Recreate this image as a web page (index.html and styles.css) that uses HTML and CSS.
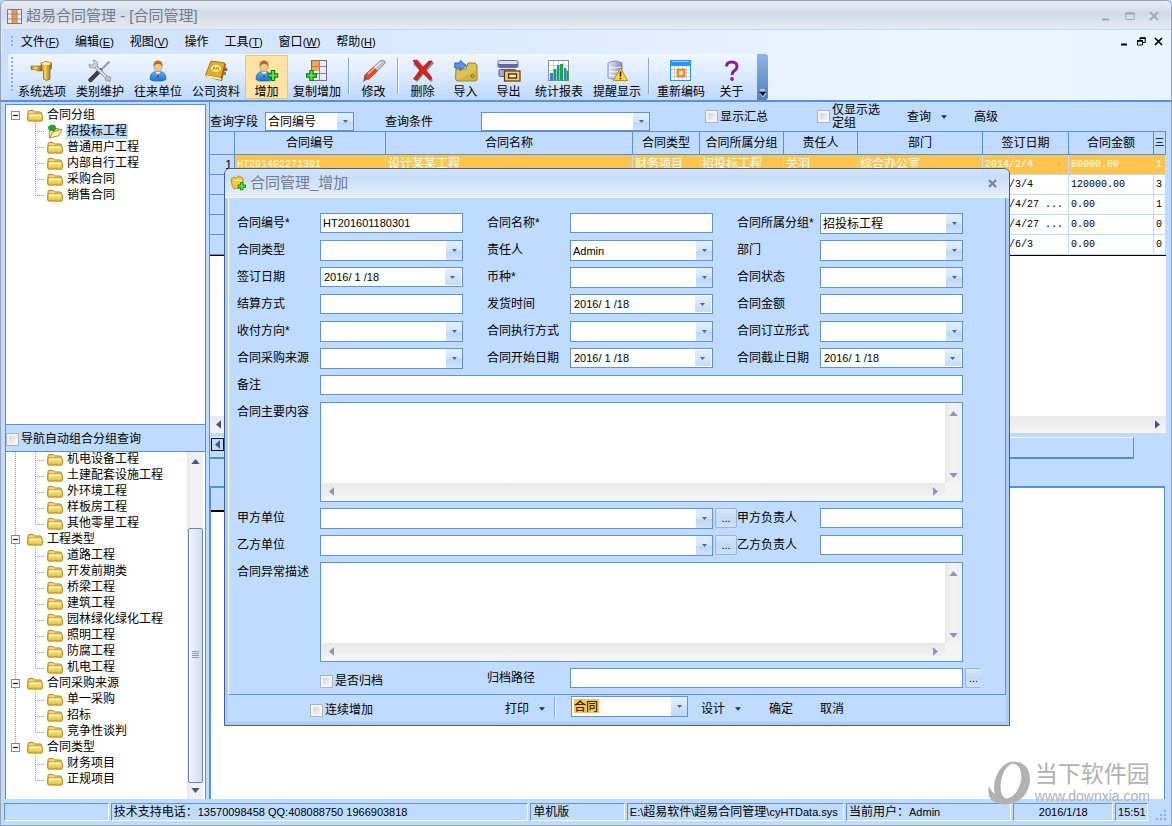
FILE: index.html
```html
<!DOCTYPE html>
<html lang="zh-CN">
<head>
    <meta charset="UTF-8">
    <meta name="viewport" content="width=device-width, initial-scale=1.0">
    <title>超易合同管理</title>
    <link rel="stylesheet" href="styles.css">
</head>
<body>
    <!-- 公用图标 -->
    <svg class="sprite" aria-hidden="true">
        <defs>
            <linearGradient id="g-gold" x1="0" y1="0" x2="0" y2="1"><stop offset="0" stop-color="#fdf2a0"/><stop offset="1" stop-color="#e3b92f"/></linearGradient>
            <linearGradient id="g-brass" x1="0" y1="0" x2="1" y2="0"><stop offset="0" stop-color="#b8860f"/><stop offset=".4" stop-color="#f6d65c"/><stop offset="1" stop-color="#8e6208"/></linearGradient>
            <linearGradient id="g-coat" x1="0" y1="0" x2="0" y2="1"><stop offset="0" stop-color="#5cb0f4"/><stop offset="1" stop-color="#1f6fd0"/></linearGradient>
            <linearGradient id="g-db" x1="0" y1="0" x2="1" y2="0"><stop offset="0" stop-color="#e8ebfa"/><stop offset="1" stop-color="#8388c4"/></linearGradient>
        </defs>
        <symbol id="folder" viewBox="0 0 16 14">
            <path d="M1 11V3.5Q1 2 2.500 2H6L7.500 3.500H13Q14.500 3.500 14.500 5V11" fill="#f3dd72" stroke="#a88310"/>
            <path d="M1.500 12.500Q.8 12.500 .8 11.500V6.500Q.8 5.500 2 5.500H14Q15.300 5.500 15.300 6.500V11.500Q15.300 12.700 14 12.700Z" fill="url(#g-gold)" stroke="#b08a12"/>
            <path d="M2 6.500H14" stroke="#fffbd8"/>
        </symbol>
        <symbol id="folder-open" viewBox="0 0 16 16">
            <path d="M2 15V5H12V8" fill="#f7e9a0" stroke="#b08a12"/>
            <path d="M2 15L6 8.500L15.500 5.500L12 12.500Z" fill="#fdf3a8" stroke="#b08a12"/>
            <path d="M1 3L4 1L8 1.500L9 5L7 7.500L3 7L1 5Z" fill="#23a628" stroke="#0d7a16" stroke-width=".6"/>
        </symbol>
        <symbol id="tri-up" viewBox="0 0 10 6"><path d="M0 6L5 0L10 6Z"/></symbol>
        <symbol id="tri-down" viewBox="0 0 10 6"><path d="M0 0H10L5 6Z"/></symbol>
        <symbol id="tri-left" viewBox="0 0 6 10"><path d="M6 0V10L0 5Z"/></symbol>
        <symbol id="tri-right" viewBox="0 0 6 10"><path d="M0 0V10L6 5Z"/></symbol>
        <symbol id="person" viewBox="0 0 24 24">
            <path d="M4 20.500Q4 13 10 12.500H14Q20 13 20 20.500L17 22H7Z" fill="url(#g-coat)" stroke="#1b62b8" stroke-width=".7"/>
            <path d="M9.500 12.500L12 17L14.500 12.500Z" fill="#fff"/>
            <path d="M12 13L11.300 17L12 19L12.700 17Z" fill="#234"/>
            <ellipse cx="12" cy="7.500" rx="4" ry="5" fill="#f7c58c" stroke="#b97b35" stroke-width=".6"/>
            <path d="M7.500 7.500Q7 1.500 12 1.500Q17 1.500 16.500 7.500Q15.500 4.800 12.500 5Q9 4.500 7.500 7.500Z" fill="#a8742c"/>
        </symbol>
        <symbol id="plus" viewBox="0 0 10 10"><path d="M3.500 .5H6.500V3.500H9.500V6.500H6.500V9.500H3.500V6.500H.5V3.500H3.500Z" fill="#5fe03a" stroke="#067a10"/></symbol>
    </svg>

    <!-- 标题栏 -->
    <header class="titlebar">
        <svg class="app-icon" viewBox="0 0 15 15"><rect x=".5" y=".5" width="14" height="14" fill="#e8e9f4" stroke="#77768c"/><rect x="5" y="1" width="5" height="13" fill="#f59a35"/><path d="M5 1V14M10 1V14M1 5H14M1 10H14" stroke="#8a819a" stroke-width=".8"/></svg>
        <h1>超易合同管理 - [合同管理]</h1>
        <div class="window-buttons">
            <button aria-label="最小化"><svg viewBox="0 0 10 10"><path d="M1 8.500H8" stroke="#a3a8b4" stroke-width="2"/></svg></button>
            <button aria-label="最大化"><svg viewBox="0 0 10 10"><path d="M.8 2H9.200V8.500H.8Z" fill="none" stroke="#a3a8b4"/><path d="M.5 2.500H9.500" stroke="#a3a8b4" stroke-width="2"/></svg></button>
            <button aria-label="关闭"><svg viewBox="0 0 10 10"><path d="M1 1L9 9M9 1L1 9" stroke="#a3a8b4" stroke-width="2"/></svg></button>
        </div>
    </header>

    <!-- 菜单栏 -->
    <nav class="menubar">
        <span class="grip"></span>
        <button>文件<span class="en">(<u>F</u>)</span></button>
        <button>编辑<span class="en">(<u>E</u>)</span></button>
        <button>视图<span class="en">(<u>V</u>)</span></button>
        <button>操作</button>
        <button>工具<span class="en">(<u>T</u>)</span></button>
        <button>窗口<span class="en">(<u>W</u>)</span></button>
        <button>帮助<span class="en">(<u>H</u>)</span></button>
        <div class="mdi-buttons">
            <button aria-label="子窗口最小化"><svg viewBox="0 0 9 9"><path d="M1 7.500H7" stroke="#000" stroke-width="2"/></svg></button>
            <button aria-label="子窗口还原"><svg viewBox="0 0 9 9"><path d="M.5 3.500H5.500V8H.5ZM3 3V.8H8.200V5.500H6" fill="none" stroke="#000"/><path d="M0 4H6M3 1.200H8.500" stroke="#000" stroke-width="1.500"/></svg></button>
            <button aria-label="子窗口关闭"><svg viewBox="0 0 9 9"><path d="M1 1L8 8M8 1L1 8" stroke="#000" stroke-width="1.700"/></svg></button>
        </div>
    </nav>

    <!-- 工具栏 -->
    <div class="toolbar-row">
        <div class="toolbar">
            <span class="grip tall"></span>
            <button class="tool"><svg viewBox="0 0 24 24"><path d="M1 7H12V12H8L5 10.500H1Z" fill="url(#g-brass)" stroke="#8a640e" stroke-width=".6"/><path d="M11 4Q16 1 21.500 4V9L20 12V20Q16.500 23 13.500 20V12L11 9Z" fill="url(#g-brass)" stroke="#8a640e" stroke-width=".7"/><ellipse cx="16.200" cy="4.500" rx="4.500" ry="1.600" fill="#f9e894"/></svg>系统选项</button>
            <button class="tool"><svg viewBox="0 0 24 24"><path d="M21.500 2.500L12 12" stroke="#9aa0a8" stroke-width="2.200"/><path d="M12 11.500L2.500 21" stroke="#3c3f45" stroke-width="4.500" stroke-linecap="round"/><path d="M5 5L19.500 19.500" stroke="#9a9fa8" stroke-width="3.500"/><path d="M5.500 5.500L19 19" stroke="#e5e8ec" stroke-width="1.500"/><path d="M1 5L4 6.500L6.500 4L5 1Q10 1 9.500 6.500Q7 10 1.500 8.500Z" fill="#d0d4da" stroke="#878c94" stroke-width=".7"/><path d="M17 21L19 17L23 18.500L22 22.500Z" fill="#bfc3c9" stroke="#878c94" stroke-width=".7"/></svg>类别维护</button>
            <button class="tool"><svg><use href="#person"/></svg>往来单位</button>
            <button class="tool"><svg viewBox="0 0 24 24"><path d="M7 3L22 5L18 22L2 18Z" fill="#8f5f0b"/><path d="M20 8L23 9V12L20 12Z" fill="#e23a2a"/><path d="M19.500 12.500L22 13V16L19 16Z" fill="#3cb04a"/><path d="M7 2L21 4L17 19L1.500 16Z" fill="#e2ac24" stroke="#94650c" stroke-width=".8"/><path d="M2 16L17 19L17.500 21L3 18.500Z" fill="#fbeec0"/><ellipse cx="12" cy="9.500" rx="5" ry="3.700" fill="#f8e692"/><path d="M9 11L10 8L12 10.500L13.500 8L15 11" fill="none" stroke="#b5801b"/></svg>公司资料</button>
            <button class="tool active"><svg viewBox="0 0 24 24"><use href="#person" x="-3" width="24" height="24"/><use href="#plus" x="12.500" y="11" width="11" height="11"/></svg>增加</button>
            <button class="tool"><svg viewBox="0 0 24 24"><rect x="6.500" y="1.500" width="15" height="20" fill="#eceaf6" stroke="#736f80"/><rect x="7" y="2" width="7" height="10" fill="#f7a650"/><path d="M14.500 2V21.500M7 7.500H21M7 14.500H21" stroke="#8a8598"/><use href="#plus" x="1" y="11" width="11" height="11"/></svg>复制增加</button>
            <span class="sep"></span>
            <button class="tool"><svg viewBox="0 0 24 24"><path d="M1 23L2.500 17L6 19.500Z" fill="#60616a"/><path d="M2.500 16.500L11.500 8L15.500 12L6.500 20.500Q2.500 20.500 2.500 16.500Z" fill="#e84a24" stroke="#8d2912" stroke-width=".7"/><path d="M11.500 8L18 2Q22 0 23.500 3.500L15.500 12Z" fill="#c2c3ce" stroke="#666773" stroke-width=".7"/><path d="M6 15L19 3" stroke="#fff" stroke-opacity=".65" stroke-width="1.500"/></svg>修改</button>
            <span class="sep"></span>
            <button class="tool"><svg viewBox="0 0 24 24"><path d="M3 4L21 22M22 3L5 22" stroke="#8b8b93" stroke-width="3"/><path d="M2 1.500L6 1L12 8L18 2L21 2L14.500 10.500L21 19L19 21L12 13.500L5.500 21L2.500 20L9 11Z" fill="#df2020" stroke="#a30f10" stroke-width=".7"/></svg>删除</button>
            <button class="tool"><svg viewBox="0 0 24 24"><path d="M2 10H12L14 4H21L23 6V21L21 22H3L1.500 20Z" fill="#dcc158" stroke="#8e7621" stroke-width=".9"/><path d="M3 21L22 12V21Z" fill="#c9a838" opacity=".6"/><circle cx="18.500" cy="17" r="1.500" fill="none" stroke="#7d651a"/><path d="M.8 4H6V1.500L12.500 6.500L6 11.500V9H.8Z" fill="#5c92ec" stroke="#214ea8" stroke-width=".8"/></svg>导入</button>
            <button class="tool"><svg viewBox="0 0 24 24"><rect x="1" y="1.500" width="20" height="7" rx="1.500" fill="#dcdff2" stroke="#6a6c92"/><path d="M1 5H21V8H1Z" fill="#6668a4"/><rect x="2" y="10.500" width="17" height="7" rx="1.500" fill="#a6a9d0" stroke="#56587e"/><rect x="7.500" y="12" width="15.500" height="10" fill="#ffc864" stroke="#5a3a0a" stroke-width="1.200"/><rect x="11.500" y="15" width="8" height="4" fill="#ffe9bd" stroke="#352408" stroke-width="1.300"/></svg>导出</button>
            <button class="tool"><svg viewBox="0 0 24 24"><rect x="1.500" y="1.500" width="20" height="20" fill="#fff" stroke="#84909c"/><path d="M2 6.500H21M2 11.500H21M2 16.500H21M6.500 2V21M11.500 2V21M16.500 2V21" stroke="#c6cdd4" stroke-width=".8"/><path d="M3 14H6V21.500H3Z M10 6H12.500V21.500H10Z M17 9H19.500V21.500H17Z" fill="#2f7fe8"/><path d="M6.500 10H9.500V21.500H6.500Z M13 5H16V21.500H13Z M19.500 12H21.500V21.500H19.500Z" fill="#1fa82b"/></svg>统计报表</button>
            <button class="tool"><svg viewBox="0 0 24 24"><path d="M3 4Q10 0 17 4V19Q10 22 3 19Z" fill="url(#g-db)" stroke="#7478aa" stroke-width=".8"/><path d="M4 8Q10 10 16 8M4 12Q10 14 16 12M4 16Q10 18 16 16" fill="none" stroke="#fff" stroke-width=".9"/><path d="M15.500 9L22.500 21.500H8.500Z" fill="#ffd92b" stroke="#c98b0a"/><path d="M15.500 12.500V17.500M15.500 18.800V20.300" stroke="#1c1600" stroke-width="1.500"/></svg>提醒显示</button>
            <span class="sep"></span>
            <button class="tool"><svg viewBox="0 0 24 24"><rect x="1.500" y="1.500" width="20" height="20" fill="#fff" stroke="#2196f3"/><path d="M1 1H22V7H1Z" fill="#2599f5"/><path d="M3 2.500H20" stroke="#96d4ff"/><path d="M2 10.500H21M2 14H21M2 17.500H21M5.500 7V21M9.500 7V21M13.500 7V21M17.500 7V21" stroke="#bcc5d8" stroke-width=".8"/><rect x="8" y="10" width="8" height="8" fill="#f98b4a" stroke="#e46b3d" stroke-width=".8"/><circle cx="12" cy="14" r="2.300" fill="#fff27a"/></svg>重新编码</button>
            <button class="tool"><svg viewBox="0 0 24 24"><path d="M6.500 7.500Q6.500 3 11.500 3Q17 3 17 7.500Q17 10 14 12Q12 13.500 12 16" fill="none" stroke="#8b1fa4" stroke-width="3"/><circle cx="12" cy="20" r="1.900" fill="#8b1fa4"/></svg>关于</button>
            <span class="toolbar-end"><svg viewBox="0 0 7 8"><path d="M1 1H6" stroke="#fff"/><path d="M0 3H7L3.500 7Z" fill="#000"/><path d="M1 4L4 8L7 4" fill="none" stroke="#fff" stroke-width=".6"/></svg></span>
        </div>
    </div>

    <!-- 主要内容 -->
    <main class="workspace">
        <aside class="sidebar">
            <div class="tree-box first">
                <ul class="tree">
                    <li class="root last">
                        <div class="node"><span class="expander"></span><svg><use href="#folder"/></svg><span>合同分组</span></div>
                        <ul>
                            <li><svg><use href="#folder-open"/></svg><span class="selected">招投标工程</span></li>
                            <li><svg><use href="#folder"/></svg><span>普通用户工程</span></li>
                            <li><svg><use href="#folder"/></svg><span>内部自行工程</span></li>
                            <li><svg><use href="#folder"/></svg><span>采购合同</span></li>
                            <li><svg><use href="#folder"/></svg><span>销售合同</span></li>
                        </ul>
                    </li>
                </ul>
            </div>
            <label class="nav-check"><input type="checkbox">导航自动组合分组查询</label>
            <div class="tree-box second">
                <ul class="tree">
                    <li class="root">
                        <ul>
                            <li><svg><use href="#folder"/></svg><span>机电设备工程</span></li>
                            <li><svg><use href="#folder"/></svg><span>土建配套设施工程</span></li>
                            <li><svg><use href="#folder"/></svg><span>外环境工程</span></li>
                            <li><svg><use href="#folder"/></svg><span>样板房工程</span></li>
                            <li><svg><use href="#folder"/></svg><span>其他零星工程</span></li>
                        </ul>
                    </li>
                    <li class="root">
                        <div class="node"><span class="expander"></span><svg><use href="#folder"/></svg><span>工程类型</span></div>
                        <ul>
                            <li><svg><use href="#folder"/></svg><span>道路工程</span></li>
                            <li><svg><use href="#folder"/></svg><span>开发前期类</span></li>
                            <li><svg><use href="#folder"/></svg><span>桥梁工程</span></li>
                            <li><svg><use href="#folder"/></svg><span>建筑工程</span></li>
                            <li><svg><use href="#folder"/></svg><span>园林绿化绿化工程</span></li>
                            <li><svg><use href="#folder"/></svg><span>照明工程</span></li>
                            <li><svg><use href="#folder"/></svg><span>防腐工程</span></li>
                            <li><svg><use href="#folder"/></svg><span>机电工程</span></li>
                        </ul>
                    </li>
                    <li class="root">
                        <div class="node"><span class="expander"></span><svg><use href="#folder"/></svg><span>合同采购来源</span></div>
                        <ul>
                            <li><svg><use href="#folder"/></svg><span>单一采购</span></li>
                            <li><svg><use href="#folder"/></svg><span>招标</span></li>
                            <li><svg><use href="#folder"/></svg><span>竞争性谈判</span></li>
                        </ul>
                    </li>
                    <li class="root last">
                        <div class="node"><span class="expander"></span><svg><use href="#folder"/></svg><span>合同类型</span></div>
                        <ul>
                            <li><svg><use href="#folder"/></svg><span>财务项目</span></li>
                            <li><svg><use href="#folder"/></svg><span>正规项目</span></li>
                        </ul>
                    </li>
                </ul>
                <div class="vbar dark">
                    <svg class="v"><use href="#tri-up"/></svg>
                    <span class="track"></span>
                    <span class="thumb"></span>
                    <svg class="v"><use href="#tri-down"/></svg>
                </div>
            </div>
        </aside>

        <section class="content">
            <div class="filter">
                <div class="filter-field">
                    <label for="q-field">查询字段</label>
                    <select id="q-field" class="short"><option>合同编号</option></select>
                </div>
                <div class="filter-field">
                    <label for="q-value">查询条件</label>
                    <select id="q-value" class="long"><option></option></select>
                </div>
                <label class="check total"><input type="checkbox">显示汇总</label>
                <label class="check only"><input type="checkbox"><span>仅显示选<br>定组</span></label>
                <button class="flat query">查询<svg class="caret"><use href="#tri-down"/></svg></button>
                <button class="flat">高级</button>
            </div>

            <!-- 合同列表 -->
            <div class="grid-area">
                <table>
                    <colgroup>
                        <col class="c-no"><col class="c-code"><col><col class="c-type"><col class="c-group"><col class="c-person"><col class="c-dept"><col class="c-date"><col class="c-money"><col class="c-more">
                    </colgroup>
                    <thead>
                        <tr><th></th><th>合同编号</th><th>合同名称</th><th>合同类型</th><th>合同所属分组</th><th>责任人</th><th>部门</th><th>签订日期</th><th>合同金额</th><th class="cut">三</th></tr>
                    </thead>
                    <tbody>
                        <tr class="current"><th>1</th><td>HT201402271301</td><td>设计某某工程</td><td>财务项目</td><td>招投标工程</td><td>关羽</td><td>综合办公室</td><td>2014/2/4</td><td>80000.00</td><td>1</td></tr>
                        <tr><th></th><td></td><td></td><td></td><td></td><td></td><td></td><td>2014/3/4</td><td>120000.00</td><td>3</td></tr>
                        <tr><th></th><td></td><td></td><td></td><td></td><td></td><td></td><td>2014/4/27 ...</td><td>0.00</td><td>1</td></tr>
                        <tr><th></th><td></td><td></td><td></td><td></td><td></td><td></td><td>2014/4/27 ...</td><td>0.00</td><td>0</td></tr>
                        <tr><th></th><td></td><td></td><td></td><td></td><td></td><td></td><td>2014/6/3</td><td>0.00</td><td>0</td></tr>
                    </tbody>
                </table>
                <div class="hbar dark">
                    <svg class="h"><use href="#tri-left"/></svg>
                    <svg class="h"><use href="#tri-right"/></svg>
                </div>
            </div>

            <div class="tabs">
                <div class="tab-strip"><button aria-label="向左"><svg class="h"><use href="#tri-left"/></svg></button></div>
            </div>
            <div class="detail"><div class="detail-head"></div></div>
        </section>
    </main>

    <!-- 状态栏 -->
    <footer class="statusbar">
        <span class="s-empty"></span>
        <span class="s-phone">技术支持电话：<span class="en">13570098458 QQ:408088750 1966903818</span></span>
        <span class="s-edition">单机版</span>
        <span class="s-path"><span class="en">E:\</span>超易软件<span class="en">\</span>超易合同管理<span class="en">\cyHTData.sys</span></span>
        <span class="s-user">当前用户：<span class="en">Admin</span></span>
        <span class="s-date en">2016/1/18</span>
        <span class="s-time">15:51</span>
        <svg class="resize" viewBox="0 0 12 12"><path d="M8 0H10V2H8ZM4 4H6V6H4ZM8 4H10V6H8ZM0 8H2V10H0ZM4 8H6V10H4ZM8 8H10V10H8Z" fill="#8ab2e6"/></svg>
    </footer>

    <!-- 增加合同对话框 -->
    <form class="dialog">
        <div class="dialog-title">
            <svg viewBox="0 0 16 16"><path d="M1 4L4 2L6 3L9 1L13 3V9L11 13L4 14L2 10Z" fill="#f2c73c" stroke="#b4820e" stroke-width=".8"/><path d="M4 6L8 5L12 6" fill="none" stroke="#fff3b0"/><use href="#plus" x="7.500" y="7" width="8.500" height="8.500"/></svg>
            <h2>合同管理_增加</h2>
            <button type="button" aria-label="关闭"><svg viewBox="0 0 10 10"><path d="M1 1L9 9M9 1L1 9" stroke="#6f85a8" stroke-width="2.400"/></svg></button>
        </div>
        <div class="dialog-body">
            <label class="start" for="f-code">合同编号*</label><input id="f-code" type="text" value="HT201601180301">
            <label class="mid" for="f-name">合同名称*</label><input id="f-name" type="text">
            <label class="end" for="f-group">合同所属分组*</label><select id="f-group"><option>招投标工程</option></select>

            <label class="start" for="f-type">合同类型</label><select id="f-type"><option></option></select>
            <label class="mid" for="f-person">责任人</label><select id="f-person" class="en"><option>Admin</option></select>
            <label class="end" for="f-dept">部门</label><select id="f-dept"><option></option></select>

            <label class="start" for="f-sign">签订日期</label><input id="f-sign" class="date" type="text" value="2016/ 1 /18">
            <label class="mid" for="f-coin">币种*</label><select id="f-coin"><option></option></select>
            <label class="end" for="f-state">合同状态</label><select id="f-state"><option></option></select>

            <label class="start" for="f-settle">结算方式</label><input id="f-settle" type="text">
            <label class="mid" for="f-ship">发货时间</label><input id="f-ship" class="date" type="text" value="2016/ 1 /18">
            <label class="end" for="f-money">合同金额</label><input id="f-money" type="text">

            <label class="start" for="f-dir">收付方向*</label><select id="f-dir"><option></option></select>
            <label class="mid" for="f-exec">合同执行方式</label><select id="f-exec"><option></option></select>
            <label class="end" for="f-form">合同订立形式</label><select id="f-form"><option></option></select>

            <label class="start" for="f-src">合同采购来源</label><select id="f-src"><option></option></select>
            <label class="mid" for="f-begin">合同开始日期</label><input id="f-begin" class="date" type="text" value="2016/ 1 /18">
            <label class="end" for="f-end">合同截止日期</label><input id="f-end" class="date" type="text" value="2016/ 1 /18">

            <label class="start" for="f-memo">备注</label><input id="f-memo" class="full" type="text">

            <label class="start" for="f-main">合同主要内容</label>
            <div class="memo full">
                <textarea id="f-main"></textarea>
                <div class="vbar"><svg class="v"><use href="#tri-up"/></svg><svg class="v"><use href="#tri-down"/></svg></div>
                <div class="hbar"><svg class="h"><use href="#tri-left"/></svg><svg class="h"><use href="#tri-right"/></svg></div>
            </div>

            <label class="start" for="f-a">甲方单位</label><select id="f-a" class="wide"><option></option></select>
            <button type="button" class="more">...</button><label class="end" for="f-a2">甲方负责人</label><input id="f-a2" type="text">

            <label class="start" for="f-b">乙方单位</label><select id="f-b" class="wide"><option></option></select>
            <button type="button" class="more">...</button><label class="end" for="f-b2">乙方负责人</label><input id="f-b2" type="text">

            <label class="start" for="f-bad">合同异常描述</label>
            <div class="memo full">
                <textarea id="f-bad"></textarea>
                <div class="vbar"><svg class="v"><use href="#tri-up"/></svg><svg class="v"><use href="#tri-down"/></svg></div>
                <div class="hbar"><svg class="h"><use href="#tri-left"/></svg><svg class="h"><use href="#tri-right"/></svg></div>
            </div>

            <label class="check archive"><input type="checkbox">是否归档</label>
            <label class="mid" for="f-path">归档路径</label><input id="f-path" class="path" type="text">
            <button type="button" class="more path-more">...</button>
        </div>
        <div class="dialog-foot">
            <label class="check"><input type="checkbox">连续增加</label>
            <button type="button" class="flat print">打印<svg class="caret"><use href="#tri-down"/></svg></button>
            <span class="sep"></span>
            <select class="tpl" aria-label="打印模板"><option>合同</option></select>
            <button type="button" class="flat design">设计<svg class="caret"><use href="#tri-down"/></svg></button>
            <button type="button" class="flat ok">确定</button>
            <button type="button" class="flat">取消</button>
        </div>
    </form>

    <!-- 水印 -->
    <div class="watermark">
        <svg viewBox="0 0 44 46"><path fill-rule="evenodd" d="M26 1Q43 2 43 20Q41 38 27 43Q12 48 3 40Q-1 35 1 26Q4 33 7 34Q5 26 8 17Q14 2 26 1ZM25 3Q15 7 13 24Q12 37 19 39Q30 37 34 20Q35 4 25 3Z" fill="#b1b1b3"/></svg>
        <div><strong>当下软件园</strong><a href="#">www.downxia.com</a></div>
    </div>
</body>
</html>
```
FILE: styles.css
```css
* {
    box-sizing: border-box;
}

body {
    font-family: "Liberation Sans", "Noto Sans CJK SC", sans-serif;
    font-size: 12px;
    line-height: 16px;
    color: #000;
    margin: 0;
    height: 100vh;
    display: flex;
    flex-direction: column;
    position: relative;
    overflow: hidden;
    background: #bfdbff;
    border: 1px solid #98a2b4;
    border-width: 1px 1px 0;
    border-radius: 6px 6px 0 0;
}

button, input, select, textarea {
    font: inherit;
    color: inherit;
    margin: 0;
    padding: 0;
}

button {
    background: none;
    border: 0;
}

h1, h2 {
    margin: 0;
    font-size: 15px;
    font-weight: normal;
    color: #747b8b;
}

ul {
    list-style: none;
    margin: 0;
    padding: 0;
}

.sprite {
    position: absolute;
    width: 0;
    height: 0;
}

.en {
    font-size: 11px;
}

/* 标题栏 */
.titlebar {
    display: flex;
    align-items: center;
    height: 29px;
    padding: 2px 12px 0 6px;
    background: linear-gradient(#e9edf4, #d4dbe7 45%, #e6eaf1);
    border-bottom: 1px solid #c9d6ea;
}

.app-icon {
    width: 15px;
    height: 15px;
    margin-right: 4px;
}

.window-buttons, .mdi-buttons {
    display: flex;
    margin-left: auto;
}

.window-buttons {
    gap: 14px;
}

.window-buttons svg {
    display: block;
    width: 10px;
    height: 10px;
}

/* 菜单栏 */
.menubar {
    display: flex;
    align-items: center;
    gap: 16px;
    height: 24px;
    padding: 0 8px 0 9px;
    background: linear-gradient(90deg, #cadfff, #edf5ff 80%, #e9f3ff);
    border-left: 1px solid #e9f3ff;
}

.mdi-buttons {
    gap: 8px;
    padding-bottom: 2px;
}

.mdi-buttons svg {
    display: block;
    width: 9px;
    height: 9px;
}

.grip {
    width: 2px;
    height: 12px;
    margin-right: -8px;
    background: repeating-linear-gradient(#8db0e2 0 2px, transparent 2px 4px);
}

.grip.tall {
    height: 36px;
    margin: 3px 0 0 3px;
}

/* 工具栏 */
.toolbar-row {
    padding: 0 4px 0 7px;
    background: linear-gradient(90deg, #cadfff, #edf5ff 80%, #e9f3ff);
    border-bottom: 2px solid #5a90d8;
}

.toolbar {
    display: flex;
    width: max-content;
    height: 46px;
    background: linear-gradient(#f1f7ff, #dbe9ff 50%, #bdd8ff);
    border-radius: 3px;
}

.tool {
    display: flex;
    flex-direction: column;
    align-items: center;
    gap: 1px;
    min-width: 43px;
    height: 44px;
    margin-top: 1px;
    padding: 3px 4px 0;
    border: 1px solid transparent;
}

.tool svg {
    display: block;
    flex: none;
    width: 24px;
    height: 24px;
}

.tool.active {
    background: #ffe2a6;
    border-color: #f6c560;
}

.sep {
    width: 2px;
    height: 36px;
    margin: 4px 2px 0;
    border-left: 1px solid #7fa9e0;
    border-right: 1px solid #fff;
}

.toolbar-end {
    width: 11px;
    margin-left: 4px;
    padding: 35px 0 0 2px;
    background: linear-gradient(#8fb3e4, #5280bf);
    border-radius: 0 3px 3px 0;
}

.toolbar-end svg {
    display: block;
    width: 7px;
    height: 8px;
}

/* 主要内容 */
.workspace {
    display: flex;
    flex: 1;
    min-height: 0;
    padding: 0 5px 2px 4px;
}

.sidebar {
    display: flex;
    flex-direction: column;
    width: 201px;
    margin: 2px 3px 0 0;
    border: 1px solid #5a90d8;
    border-bottom: 0;
}

.tree-box {
    min-height: 0;
    overflow: hidden;
    background: #fff;
}

.tree-box.first {
    flex: 318;
    padding-top: 2px;
}

.tree-box.second {
    flex: 349;
    display: flex;
    justify-content: space-between;
}

.nav-check {
    display: flex;
    align-items: center;
    gap: 2px;
    height: 28px;
    padding-top: 3px;
    border: solid #5a90d8;
    border-width: 1px 0;
}

/* 树的连接线用背景点线画 */
.root {
    background: repeating-linear-gradient(#9a9a9a 0 1px, transparent 1px 2px) 9px 0 / 1px 100% no-repeat;
}

.root.last {
    background-size: 1px 8px;
}

.first .root {
    background: none;
}

.node, .root li {
    display: flex;
    align-items: center;
    height: 16px;
}

.node {
    padding-left: 5px;
}

.expander {
    width: 9px;
    height: 9px;
    margin-right: 7px;
    border: 1px solid #8c8c7a;
    background: linear-gradient(#000, #000) center / 5px 1px no-repeat #fff;
}

.root li {
    margin-left: 29px;
    padding-left: 12px;
    background: repeating-linear-gradient(#9a9a9a 0 1px, transparent 1px 2px) 0 0 / 1px 100% no-repeat,
        repeating-linear-gradient(90deg, #9a9a9a 0 1px, transparent 1px 2px) 0 8px / 10px 1px no-repeat;
}

.root li:last-child {
    background-size: 1px 8px, 10px 1px;
}

.tree svg {
    width: 16px;
    height: 15px;
    margin-right: 3px;
}

.tree li span:last-child {
    padding: 0 1px;
    line-height: 15px;
}

.tree .selected {
    background: #bfdbfc;
}

/* 滚动条 */
.vbar, .hbar {
    display: flex;
    align-items: center;
    justify-content: space-between;
    fill: #8496c4;
}

.vbar {
    flex-direction: column;
    width: 16px;
    background: linear-gradient(90deg, #e8e8e8, #f3f3f3 40%, #efefef);
}

.hbar {
    height: 17px;
    background: linear-gradient(#e9e9e9, #efefef 60%, #f6f6f6);
}

.dark {
    fill: #47568a;
}

svg.v {
    width: 9px;
    height: 5px;
}

svg.h {
    width: 5px;
    height: 9px;
}

.tree-box .vbar {
    flex: none;
    padding: 7px 0 6px;
    margin-right: 2px;
}

.track {
    flex: 64;
}

.thumb {
    flex: 252;
    width: 15px;
    margin-bottom: 5px;
    border: 1px solid #6c83b4;
    border-radius: 2px;
    background: repeating-linear-gradient(#8a99b8 0 1px, transparent 1px 2px) center / 7px 8px no-repeat,
        linear-gradient(90deg, #f3f7ff, #cfdcf2);
}

.content {
    flex: 1;
    min-width: 0;
    display: flex;
    flex-direction: column;
    border-left: 1px solid #5a90d8;
}

/* 查询条件 */
.filter {
    display: flex;
    align-items: center;
    height: 29px;
}

.filter-field {
    display: flex;
    align-self: flex-end;
    align-items: center;
    gap: 7px;
    margin-right: 31px;
}

.filter-field + .filter-field {
    gap: 48px;
    margin-right: 55px;
}

.check {
    display: flex;
    align-items: center;
    gap: 2px;
}

.total {
    margin-right: 49px;
}

.only {
    width: 90px;
    line-height: 13px;
}

.flat {
    display: flex;
    align-items: center;
    gap: 10px;
}

.query {
    margin-right: 27px;
}

.caret {
    width: 6px;
    height: 4px;
    fill: #10307c;
}

input[type=checkbox] {
    appearance: none;
    flex: none;
    width: 13px;
    height: 13px;
    border: 1px solid #b0b5bd;
    background: linear-gradient(135deg, #c9ccd2, #fff);
    box-shadow: inset 0 0 0 2px #f3f4f6;
}

input[type=text], select, .memo {
    height: 20px;
    width: 100%;
    min-width: 0;
    padding: 0 2px;
    border: 1px solid #5f93d6;
    border-radius: 0;
    background: #fff;
}

input[type=text] {
    font-size: 11px;
}

select {
    appearance: none;
    height: 21px;
    background: url("data:image/svg+xml,%3Csvg xmlns='http://www.w3.org/2000/svg' width='5' height='3'%3E%3Cpath d='M0 0H5L2.500 3Z' fill='%233c68ad'/%3E%3C/svg%3E") right 5px center no-repeat,
        linear-gradient(#e3efff, #d3e5fb 50%, #bdd6f5 51%, #d0e3fb) right / 16px 100% no-repeat #fff;
}

.filter .short, .filter .long {
    height: 19px;
}

.filter .short {
    width: 89px;
}

.filter .long {
    width: 169px;
}

/* 合同列表 */
.grid-area {
    flex: 305;
    min-height: 0;
    display: flex;
    flex-direction: column;
    justify-content: space-between;
    background: #fff;
}

table {
    width: 100%;
    table-layout: fixed;
    border-collapse: separate;
    border-spacing: 0;
    border-top: 1px solid #5a90d8;
    border-bottom: 1px solid #000;
}

.c-no { width: 25px; }
.c-code { width: 151px; }
.c-type { width: 67px; }
.c-group { width: 84px; }
.c-person { width: 74px; }
.c-dept { width: 125px; }
.c-date { width: 86px; }
.c-money { width: 85px; }
.c-more { width: 12px; }

th, td {
    height: 20px;
    padding: 0 2px;
    overflow: hidden;
    white-space: nowrap;
    font-weight: normal;
    border-right: 1px solid #bfdbff;
    border-bottom: 1px solid #bfdbff;
}

td {
    font-family: "Liberation Mono", "Noto Sans CJK SC", monospace;
    font-size: 10px;
}

td:nth-child(n+3):nth-child(-n+7) {
    font-size: 12px;
}

th {
    background: #bfdbff;
    border-color: #5a90d8;
}

thead th {
    height: 23px;
}

tbody th {
    text-align: right;
}

.cut {
    padding: 0;
    font-size: 10px;
}

.current td {
    color: #fff;
    background: #fdc550;
}

.grid-area .hbar {
    padding: 0 6px;
}

/* 下方明细 */
.tabs {
    flex: 50;
    padding: 4px 32px 0 0;
}

.tab-strip {
    height: 22px;
    border: solid #5f93d6;
    border-width: 0 1px 2px 0;
    border-bottom-color: #4c9aa6;
    border-top: 1px solid #fff;
}

.tab-strip button {
    display: block;
    width: 13px;
    height: 13px;
    margin-left: 1px;
    padding: 1px 3px;
    border: 1px solid #000;
}

.tab-strip svg {
    display: block;
    fill: #47568a;
}

.detail {
    flex: 314;
    margin-right: 1px;
    background: #fff;
    border: 1px solid #5a90d8;
    border-top-width: 2px;
    border-bottom: 0;
}

.detail-head {
    width: 160px;
    height: 24px;
    background: #bfdbff;
    border-bottom: 2px solid #000;
}

/* 状态栏 */
.statusbar {
    display: flex;
    gap: 2px;
    height: 25px;
    padding: 2px 3px 4px;
    border-bottom: 1px solid #98a2b4;
}

.statusbar > span {
    overflow: hidden;
    white-space: nowrap;
    padding: 0 2px;
    border: 1px solid #5f93d6;
    border-right-color: #fff;
    border-bottom-color: #fff;
}

/* 比例不含每格 6px 的内边距和边框 */
.s-empty { flex: 99; }
.s-phone { flex: 413; }
.s-edition { flex: 89; }
.s-path { flex: 212; }
.s-user { flex: 160; }
.s-date { flex: 94; text-align: center; }
.s-time { flex: 27; font-size: 11px; }

.resize {
    width: 12px;
    height: 12px;
    margin: 7px 0 0 6px;
}

/* 对话框 */
.dialog {
    position: absolute;
    left: 223px;
    right: 161px;
    top: 167px;
    display: flex;
    flex-direction: column;
    background: #bfdbff;
    border: 1px solid #3d5f9c;
    border-radius: 6px 6px 0 0;
    box-shadow: inset 0 0 0 3px #b0cbf0;
}

.dialog-title {
    display: flex;
    align-items: center;
    gap: 4px;
    height: 29px;
    padding: 0 12px 0 5px;
    border-radius: 5px 5px 0 0;
    background: linear-gradient(#d5e5f9, #c9def8 30%, #e4effd);
    border-bottom: 1px solid #fff;
}

.dialog-title > svg {
    width: 16px;
    height: 16px;
}

.dialog-title h2 {
    font-size: 15px;
}

.dialog-title button {
    margin-left: auto;
}

.dialog-title button svg {
    display: block;
    width: 9px;
    height: 9px;
}

.dialog-body {
    display: grid;
    grid-template-columns: 83px 1fr 24px 83px 1fr 24px 83px 1fr 18px;
    row-gap: 6px;
    align-items: start;
    margin: 0 3px;
    padding: 15px 24px 5px 8px;
    border: 1px solid #fff;
    border-right-color: #5f93d6;
    border-bottom-color: #5f93d6;
    border-top: 0;
}

.dialog-body label {
    line-height: 21px;
    white-space: nowrap;
}

.start {
    grid-column: 1;
}

.mid {
    grid-column: 4;
}

.end {
    grid-column: 7;
}

.dialog-body .full {
    grid-column: 2 / 9;
}

.dialog-body .date {
    padding-left: 3px;
    background: url("data:image/svg+xml,%3Csvg xmlns='http://www.w3.org/2000/svg' width='5' height='3'%3E%3Cpath d='M0 0H5L2.500 3Z' fill='%233c68ad'/%3E%3C/svg%3E") right 7px center no-repeat,
        linear-gradient(#e3efff, #c6dcf8) right 1px center / 16px 16px no-repeat #fff;
}

.dialog-body .memo {
    display: grid;
    grid-template-columns: 1fr 16px;
    grid-template-rows: 1fr 17px;
    height: 100px;
    padding: 1px;
    background: #f4f4f4;
}

.memo textarea {
    border: 0;
    resize: none;
    width: 100%;
    height: 100%;
}

.memo .vbar {
    padding: 7px 0 5px;
}

.memo .hbar {
    padding: 0 7px;
}

.dialog-body .wide {
    grid-column: 2 / 6;
}

.more {
    height: 20px;
    margin: 0 0 0 2px;
    font-size: 11px;
    line-height: 18px;
    border: 1px solid #92b4e4;
    border-radius: 2px;
    background: linear-gradient(#d9e8fc, #c3d9f6 50%, #cfe1f9);
}

.dialog-body .archive {
    grid-column: 2;
    margin-top: 5px;
    line-height: 16px;
}

.dialog-body .path {
    grid-column: 5 / 9;
}

.path-more {
    border-right: 0;
}

.dialog-foot {
    display: flex;
    align-items: flex-start;
    height: 30px;
    padding: 1px 0 0 85px;
}

.dialog-foot .check {
    margin-top: 6px;
    margin-right: 132px;
}

.dialog-foot .flat {
    margin-top: 5px;
}

.dialog-foot .sep {
    height: 20px;
    margin: 1px 15px 0 9px;
}

.dialog-foot .tpl {
    width: 117px;
    margin-right: 13px;
    background: url("data:image/svg+xml,%3Csvg xmlns='http://www.w3.org/2000/svg' width='5' height='3'%3E%3Cpath d='M0 0H5L2.500 3Z' fill='%233c68ad'/%3E%3C/svg%3E") right 5px center no-repeat,
        linear-gradient(#e3efff, #bdd6f5) right / 16px 100% no-repeat,
        linear-gradient(#fdc550, #fdc550) 2px 2px / 25px 14px no-repeat #fff;
}

.design {
    margin-right: 28px;
}

.ok {
    margin-right: 27px;
}

/* 水印 */
.watermark {
    position: absolute;
    right: 21px;
    bottom: 20px;
    display: flex;
    align-items: flex-start;
    gap: 4px;
    color: #b1b1b3;
}

.watermark > svg {
    width: 43px;
    height: 46px;
}

.watermark strong, .watermark a {
    display: block;
    font-weight: normal;
    color: inherit;
    text-decoration: none;
}

.watermark strong {
    font-size: 23px;
    line-height: 28px;
}

.watermark a {
    font-size: 14px;
}
```
